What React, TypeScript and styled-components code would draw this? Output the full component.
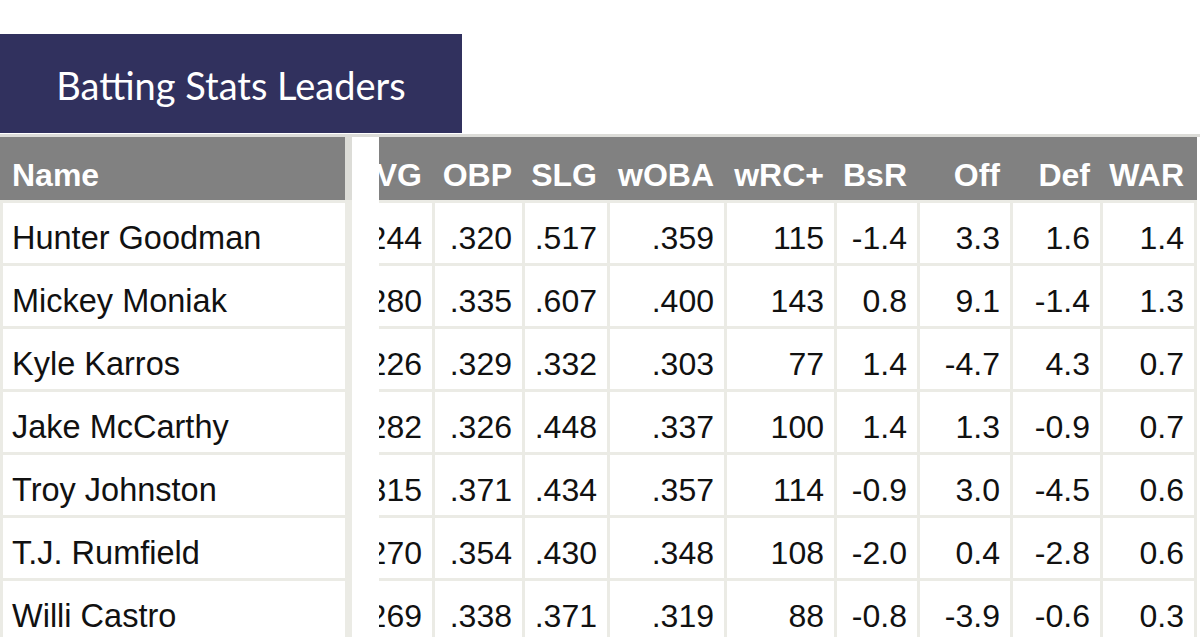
import React from "react";
import styled, { createGlobalStyle } from "styled-components";

const GlobalStyle = createGlobalStyle`
  html, body {
    margin: 0;
    padding: 0;
    background: #ffffff;
    overflow: hidden;
  }
  * { box-sizing: border-box; }
`;

const Page = styled.div`
  width: 1200px;
  height: 637px;
  padding-top: 34px;
  background: #ffffff;
  font-family: "Liberation Sans", Arial, Helvetica, sans-serif;
  overflow: hidden;
`;

const TitleTab = styled.div`
  width: 462px;
  height: 99px;
  background: #31315e;
  color: #ffffff;
  font-family: Lato, "Noto Sans", sans-serif;
  font-size: 38px;
  display: flex;
  align-items: center;
  justify-content: center;
  padding-top: 2px;
`;

const TableArea = styled.div`
  margin-top: 1px;
  border-top: 3px solid #dcdcd8;
  display: flex;
  gap: 27px;
`;

const FrozenTable = styled.table`
  border-collapse: separate;
  border-spacing: 0;
  width: 352px;
  flex: none;
`;

const ScrollPane = styled.div`
  flex: 1;
  overflow: hidden;
`;

const StatsTable = styled.table`
  border-collapse: separate;
  border-spacing: 0;
  margin-left: -34px;
  table-layout: fixed;
`;

const HeadCell = styled.th<{ $align?: "left" | "right"; $frozen?: boolean }>`
  height: 63px;
  padding: 0 ${(p) => (p.$frozen ? "0" : "13px")} 6px ${(p) => (p.$frozen ? "12px" : "0")};
  background: #818181;
  color: #ffffff;
  font-size: 32px;
  font-weight: bold;
  text-align: ${(p) => p.$align ?? "right"};
  vertical-align: bottom;
  white-space: nowrap;
  border-right: ${(p) => (p.$frozen ? "7px solid #dcdcd7" : "none")};
`;

const NameCell = styled.td`
  height: 63px;
  padding: 0 0 6px 9px;
  border-top: 3px solid #ebebe5;
  border-left: 3px solid #ebebe5;
  border-right: 7px solid #ebebe5;
  color: #111111;
  font-size: 32.5px;
  text-align: left;
  vertical-align: bottom;
  white-space: nowrap;
`;

const StatCell = styled.td`
  height: 63px;
  padding: 0 10px 6px 0;
  border-top: 3px solid #ebebe5;
  border-right: 3px solid #ebebe5;
  color: #111111;
  font-size: 32px;
  text-align: right;
  vertical-align: bottom;
  white-space: nowrap;
  overflow: hidden;
`;

type Row = {
  name: string;
  stats: string[];
};

const columns: { label: string; width: number }[] = [
  { label: "AVG", width: 90 },
  { label: "OBP", width: 90 },
  { label: "SLG", width: 85 },
  { label: "wOBA", width: 117 },
  { label: "wRC+", width: 110 },
  { label: "BsR", width: 83 },
  { label: "Off", width: 93 },
  { label: "Def", width: 90 },
  { label: "WAR", width: 94 },
];

const rows: Row[] = [
  { name: "Hunter Goodman", stats: [".244", ".320", ".517", ".359", "115", "-1.4", "3.3", "1.6", "1.4"] },
  { name: "Mickey Moniak", stats: [".280", ".335", ".607", ".400", "143", "0.8", "9.1", "-1.4", "1.3"] },
  { name: "Kyle Karros", stats: [".226", ".329", ".332", ".303", "77", "1.4", "-4.7", "4.3", "0.7"] },
  { name: "Jake McCarthy", stats: [".282", ".326", ".448", ".337", "100", "1.4", "1.3", "-0.9", "0.7"] },
  { name: "Troy Johnston", stats: [".315", ".371", ".434", ".357", "114", "-0.9", "3.0", "-4.5", "0.6"] },
  { name: "T.J. Rumfield", stats: [".270", ".354", ".430", ".348", "108", "-2.0", "0.4", "-2.8", "0.6"] },
  { name: "Willi Castro", stats: [".269", ".338", ".371", ".319", "88", "-0.8", "-3.9", "-0.6", "0.3"] },
];

export default function App() {
  return (
    <>
      <GlobalStyle />
      <Page>
        <TitleTab>Batting Stats Leaders</TitleTab>
        <TableArea>
          <FrozenTable>
            <thead>
              <tr>
                <HeadCell $align="left" $frozen>
                  Name
                </HeadCell>
              </tr>
            </thead>
            <tbody>
              {rows.map((r) => (
                <tr key={r.name}>
                  <NameCell>{r.name}</NameCell>
                </tr>
              ))}
            </tbody>
          </FrozenTable>
          <ScrollPane>
            <StatsTable>
              <colgroup>
                {columns.map((c) => (
                  <col key={c.label} style={{ width: c.width }} />
                ))}
              </colgroup>
              <thead>
                <tr>
                  {columns.map((c) => (
                    <HeadCell key={c.label}>{c.label}</HeadCell>
                  ))}
                </tr>
              </thead>
              <tbody>
                {rows.map((r) => (
                  <tr key={r.name}>
                    {r.stats.map((s, i) => (
                      <StatCell key={columns[i].label}>{s}</StatCell>
                    ))}
                  </tr>
                ))}
              </tbody>
            </StatsTable>
          </ScrollPane>
        </TableArea>
      </Page>
    </>
  );
}
